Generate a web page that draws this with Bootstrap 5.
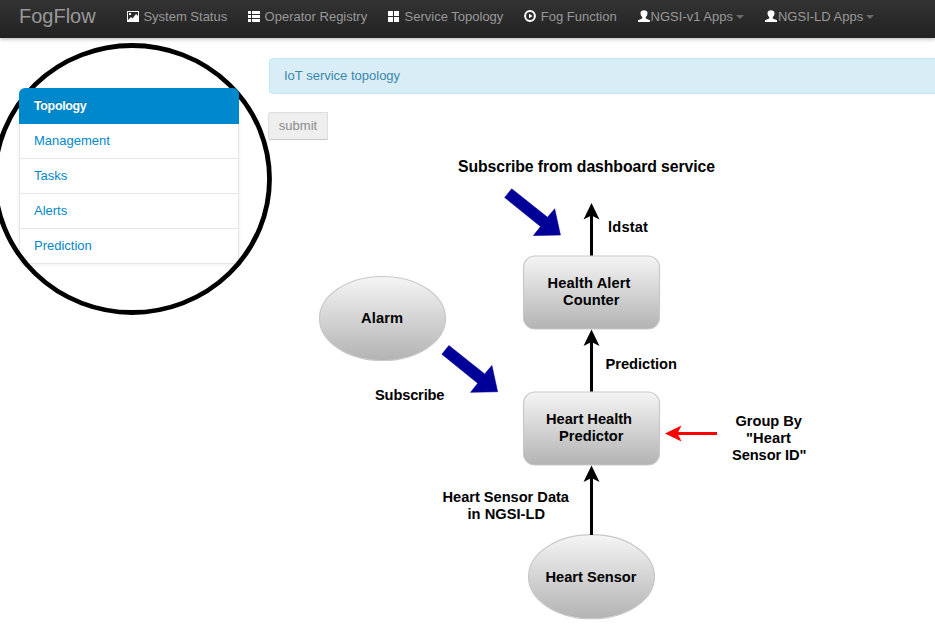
<!DOCTYPE html>
<html lang="en">
<head>
<meta charset="utf-8">
<meta name="viewport" content="width=device-width, initial-scale=1">
<title>FogFlow</title>
<link href="https://cdn.jsdelivr.net/npm/bootstrap@5.3.0/dist/css/bootstrap.min.css" rel="stylesheet">
<style>
body { font: 13px/20px "Liberation Sans", Arial, sans-serif; color: #333; background: #fff; height: 637px; overflow: hidden; }
.topbar { height: 38px; background: linear-gradient(#333, #222); box-shadow: 0 1px 4px rgba(0,0,0,.3); padding: 0 0 0 19px; }
.topbar .navbar-brand { font-size: 20px; line-height: 20px; color: #999; width: 100px; padding: 0 0 6px; margin: 0; }
.topbar .navbar-nav { gap: 5px; }
.topbar .nav-link { color: #999; padding: 1px 10px 5px; line-height: 20px; }
.topbar svg { width: 12px; height: 12px; margin-bottom: 2px; fill: #fff; }
.nav-label { margin-left: 4.4px; }
.user-label { margin-left: 1px; }
.tick { width: 7px; border: solid transparent; border-width: 4px 4px 0; border-top-color: #6b6b6b; margin-left: 3px; }
.sidebar { width: 220px; margin: 50px 0 0 19px; }
.side-menu { --bs-list-group-border-color: #e5e5e5; --bs-list-group-border-radius: 6px; box-shadow: 0 1px 4px rgba(0,0,0,.07); }
.side-menu .list-group-item { height: 35px; padding: 7px 14px; line-height: 20px; color: #08c; }
.side-menu .list-group-item.active { height: 36px; padding: 8px 15px; background: #08c; border: 0; color: #fff; font-size: 12.4px; font-weight: 700; letter-spacing: -.3px; text-shadow: 0 -1px 0 rgba(0,0,0,.2); }
.main-pane { margin: 20px 0 0 29px; min-width: 0; }
.notice { height: 36px; margin: 0 -6px 0 1px; padding: 7px 14px; color: #3a87ad; background: #d9edf7; border: 1px solid #bce8f1; border-radius: 4px; }
.send { width: 60px; height: 28px; margin-top: 18px; padding: 0; font-size: 13px; line-height: 24px; color: #8b8b8b; background: #eee; border: 1px solid #ddd; border-bottom-color: #c8c8c8; border-radius: 3px 0 0 3px; }
.topology { width: 667px; height: 497px; font: bold 14.67px "Liberation Sans", Arial, sans-serif; fill: #000; }
.topology .heading { font-size: 15.8px; }
.callout { left: -6px; top: 42px; width: 280px; height: 275px; pointer-events: none; }
</style>
<script src="https://cdn.jsdelivr.net/npm/bootstrap@5.3.0/dist/js/bootstrap.bundle.min.js"></script>
</head>
<body class="position-relative">
<nav class="topbar navbar navbar-expand d-flex flex-nowrap justify-content-start">
  <a class="navbar-brand" href="#">FogFlow</a>
  <ul class="navbar-nav flex-nowrap">
    <li class="nav-item"><a class="nav-link d-flex align-items-center" href="#"><svg viewBox="0 0 12 12"><path fill-rule="evenodd" d="M0 1h12v11H0zM1 2v9h10V2z"/><path d="M1 10l3-3 1.500 1.500L9 4l2 2v5H1zM2 3h2v2H2z"/></svg><span class="nav-label">System Status</span></a></li>
    <li class="nav-item"><a class="nav-link d-flex align-items-center" href="#"><svg viewBox="0 0 12 12"><path d="M0 1h3v3H0zM4 1h8v3H4zM0 5h3v3H0zM4 5h8v3H4zM0 9h3v3H0zM4 9h8v3H4z"/></svg><span class="nav-label">Operator Registry</span></a></li>
    <li class="nav-item"><a class="nav-link d-flex align-items-center" href="#"><svg viewBox="0 0 12 12"><path d="M0 1h5v5H0zM6 1h5v5H6zM0 7h5v5H0zM6 7h5v5H6z"/></svg><span class="nav-label">Service Topology</span></a></li>
    <li class="nav-item"><a class="nav-link d-flex align-items-center" href="#"><svg viewBox="0 0 12 12"><circle cx="6" cy="6" r="4.900" fill="none" stroke="#fff" stroke-width="2"/><path d="M5 3.700L8.600 6 5 8.300z"/></svg><span class="nav-label">Fog Function</span></a></li>
    <li class="nav-item"><a class="nav-link d-flex align-items-center" href="#"><svg viewBox="0 0 12 12"><path d="M2.500 3C2.500-.7 9.500-.7 9.500 3c0 2-.7 3.300-1.700 4v1.500L12 10.200V12H0v-1.800l4.200-1.700V7C3.200 6.300 2.500 5 2.500 3z"/></svg><span class="user-label">NGSI-v1 Apps</span><i class="tick"></i></a></li>
    <li class="nav-item"><a class="nav-link d-flex align-items-center" href="#"><svg viewBox="0 0 12 12"><path d="M2.500 3C2.500-.7 9.500-.7 9.500 3c0 2-.7 3.300-1.700 4v1.500L12 10.200V12H0v-1.800l4.200-1.700V7C3.200 6.300 2.500 5 2.500 3z"/></svg><span class="user-label">NGSI-LD Apps</span><i class="tick"></i></a></li>
  </ul>
</nav>
<div class="d-flex align-items-start">
  <aside class="sidebar flex-shrink-0">
    <div class="side-menu list-group">
      <a class="list-group-item active" href="#">Topology</a>
      <a class="list-group-item" href="#">Management</a>
      <a class="list-group-item" href="#">Tasks</a>
      <a class="list-group-item" href="#">Alerts</a>
      <a class="list-group-item" href="#">Prediction</a>
    </div>
  </aside>
  <main class="main-pane flex-grow-1">
    <div class="notice">IoT service topology</div>
    <button class="send d-block" type="button">submit</button>
    <svg class="topology d-block" viewBox="268 140 667 497">
      <defs>
        <linearGradient id="shade" x2="0" y2="1"><stop stop-color="#f5f5f5"/><stop offset="1" stop-color="#b3b3b3"/></linearGradient>
        <path id="tip" d="M0 0l8 16.500-8-4-8 4z"/>
      </defs>
      <g fill="url(#shade)" stroke="#c8c8c8" stroke-width="1.200">
        <rect x="523.500" y="256" width="136" height="73" rx="11.500"/>
        <rect x="523.500" y="392" width="136" height="73" rx="11.500"/>
        <ellipse cx="382.500" cy="318.500" rx="63" ry="42"/>
        <ellipse cx="591.500" cy="576.700" rx="63" ry="42"/>
      </g>
      <path d="M591.500 214v41.500M591.500 340v51.500M591.500 476v59" stroke="#000" stroke-width="3"/>
      <use href="#tip" x="591.500" y="203"/><use href="#tip" x="591.500" y="329.500"/><use href="#tip" x="591.500" y="465.500"/>
      <path d="M717 433.500H676" stroke="#f00" stroke-width="3"/>
      <path d="M665 433.500l16.500-8-4 8 4 8z" fill="#f00"/>
      <g fill="#009" stroke="#009" stroke-width=".6">
        <path d="M511.700 188.800L547.500 217.300l7.200-8.500 5.700 26.200-27 .6 7.200-9L504.700 197.500z"/>
        <path d="M448.900 345.500L484.700 374l7.200-8.500 5.700 26.200-27 .6 7.200-9-35.900-29.100z"/>
      </g>
      <text class="heading" x="458" y="172" textLength="257">Subscribe from dashboard service</text>
      <text x="608" y="232" textLength="40">ldstat</text>
      <text x="547.500" y="288" textLength="83">Health Alert</text>
      <text x="563" y="305" textLength="56.500">Counter</text>
      <text x="361" y="323" textLength="42">Alarm</text>
      <text x="375" y="400" textLength="69.500">Subscribe</text>
      <text x="605.500" y="369" textLength="71.500">Prediction</text>
      <text x="546" y="424" textLength="86">Heart Health</text>
      <text x="559" y="441" textLength="64.500">Predictor</text>
      <text x="735.500" y="426" textLength="66.500">Group By</text>
      <text x="746" y="443" textLength="45">"Heart</text>
      <text x="732" y="460" textLength="74.500">Sensor ID"</text>
      <text x="442.500" y="502" textLength="126.500">Heart Sensor Data</text>
      <text x="467.500" y="519" textLength="77.500">in NGSI-LD</text>
      <text x="545.500" y="582" textLength="91">Heart Sensor</text>
    </svg>
  </main>
</div>
<svg class="callout position-absolute" viewBox="-6 42 280 275"><ellipse cx="132.200" cy="179" rx="137.300" ry="133.500" fill="none" stroke="#000" stroke-width="4.800"/></svg>
</body>
</html>
